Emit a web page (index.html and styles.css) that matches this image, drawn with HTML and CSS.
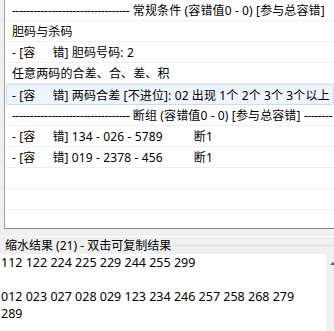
FILE: index.html
```html
<!DOCTYPE html>
<html lang="zh-CN">
<head>
  <meta charset="UTF-8">
  <title>缩水条件</title>
  <link rel="stylesheet" href="styles.css">
</head>
<body>

<div class="list">
  <div class="row"><span class="dash">---------------------------------</span> 常规条件 (容错值0 - 0) [参与总容错]</div>
  <div class="row">胆码与杀码</div>
  <div class="row">- [容<span class="gap"></span>错] 胆码号码: 2</div>
  <div class="row">任意两码的合差、合、差、积</div>
  <div class="row sel">- [容<span class="gap"></span>错] 两码合差 [不进位]: 02 出现 1个 2个 3个 3个以上</div>
  <div class="row"><span class="dash">---------------------------------</span> 断组 (容错值0 - 0) [参与总容错] <span class="dash">--------</span></div>
  <div class="row">- [容<span class="gap"></span>错] <span class="grp">134 - 026 - 5789</span>断1</div>
  <div class="row">- [容<span class="gap"></span>错] <span class="grp">019 - 2378 - 456</span>断1</div>
  <div class="row"></div>
  <div class="row"></div>
  <div class="row"></div>
</div>

<div class="result">
  <div class="caption">
    <span>缩水结果 (21) - 双击可复制结果</span>
    <span class="line"></span>
  </div>
  <div class="box">
    <div class="text">112 122 224 225 229 244 255 299<br><br>012 023 027 028 029 123 234 246 257 258 268 279<br>289</div>
    <div class="scroll"><span class="arrow"></span></div>
  </div>
</div>

</body>
</html>
```

FILE: styles.css
```css
html, body {
  margin: 0;
  padding: 0;
}
body {
  width: 334px;
  height: 331px;
  overflow: hidden;
  background-color: #f0f0f0;
  font-family: "Noto Sans", "Noto Sans CJK SC", sans-serif;
  font-size: 12px;
  color: #000;
}
.list {
  margin-left: 4px;
  height: 228px;
  background-color: #fff;
  border-left: 1px solid #a0a0a0;
  border-bottom: 1px solid #828790;
  overflow: hidden;
}
.row {
  height: 20px;
  line-height: 22px;
  padding-left: 7px;
  border-bottom: 1px solid #f0f0f0;
  white-space: nowrap;
  overflow: hidden;
  letter-spacing: 0.12px;
}
.row.sel {
  margin-left: 1px;
  padding-left: 5px;
  height: 19px;
  line-height: 21px;
  background-color: #eef5fc;
  border: 1px solid #c9dcf2;
  border-radius: 2px;
}
.dash {
  letter-spacing: -0.3px;
}
.gap {
  display: inline-block;
  width: 17px;
}
.grp {
  display: inline-block;
  width: 122px;
}
.result {
  padding-top: 7px;
}
.caption {
  display: flex;
  align-items: center;
  height: 16px;
  padding-left: 5px;
  border-top: 1px solid #fafafa;
}
.caption .line {
  flex: 1;
  margin-left: 2px;
  border-top: 1px solid #dcdcdc;
}
.box {
  display: flex;
  margin-top: 1px;
  height: 80px;
}
.text {
  flex: 1;
  background-color: #fff;
  padding: 0 0 0 1px;
  font-size: 12.5px;
  line-height: 17px;
}
.scroll {
  width: 8px;
  background-color: #f0f0f0;
  border-left: 1px solid #fafafa;
  position: relative;
}
.arrow {
  position: absolute;
  top: 8px;
  left: 4px;
  border-left: 3px solid transparent;
  border-right: 3px solid transparent;
  border-bottom: 3px solid #606060;
}
```
